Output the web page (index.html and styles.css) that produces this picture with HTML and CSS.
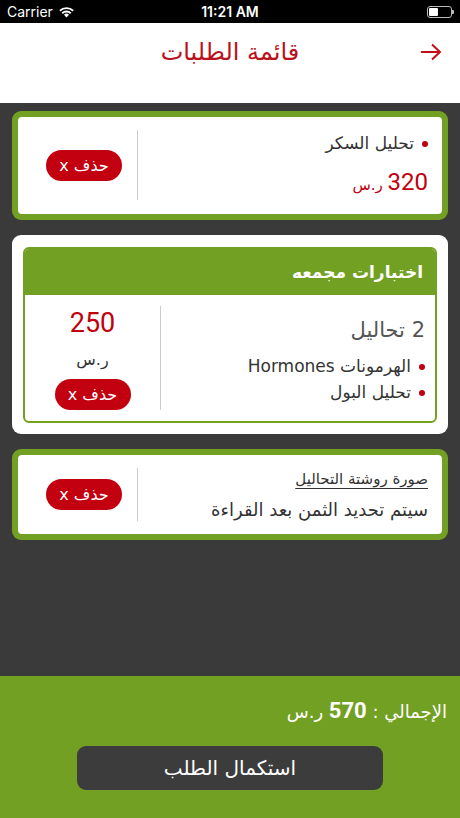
FILE: index.html
```html
<!DOCTYPE html>
<html lang="ar" dir="rtl">

<head>
	<meta charset="UTF-8">
	<title>قائمة الطلبات</title>
	<link rel="stylesheet" href="styles.css">
</head>

<body>
	<div class="status" dir="ltr">
		<div class="carrier">Carrier
			<svg width="17" height="12" viewBox="0 0 17 12">
				<path d="M8.5 11.5 L6 8.8 A3.6 3.6 0 0 1 11 8.8 Z" fill="#fff" />
				<path d="M3.6 6.6 A7 7 0 0 1 13.4 6.6 L12.1 8 A5.2 5.2 0 0 0 4.9 8 Z" fill="#fff" />
				<path d="M1.2 4.1 A10.5 10.5 0 0 1 15.8 4.1 L14.5 5.5 A8.6 8.6 0 0 0 2.5 5.5 Z" fill="#fff" />
			</svg>
		</div>
		<div class="time">11:21 AM</div>
		<div class="battery"><span class="level"></span></div>
	</div>

	<div class="topbar">
		<svg class="back" width="24" height="18" viewBox="0 0 24 18">
			<path d="M2 9 H21 M13 1.5 L21 9 L13 16.5" fill="none" stroke="#c0101a" stroke-width="2" />
		</svg>
		<h1>قائمة الطلبات</h1>
	</div>

	<div class="list">
		<div class="card green">
			<div class="inner">
				<div class="info">
					<p class="item">تحليل السكر</p>
					<p class="price"><b>320</b> ر.س</p>
				</div>
				<div class="side">
					<button class="del">حذف x</button>
				</div>
			</div>
		</div>

		<div class="card white">
			<div class="group">
				<div class="group-head">اختبارات مجمعه</div>
				<div class="group-body">
					<div class="info">
						<p class="count">2 تحاليل</p>
						<p class="item">الهرمونات Hormones</p>
						<p class="item">تحليل البول</p>
					</div>
					<div class="side center">
						<div class="big">250</div>
						<div class="cur">ر.س</div>
						<button class="del">حذف x</button>
					</div>
				</div>
			</div>
		</div>

		<div class="card green">
			<div class="inner short">
				<div class="info">
					<p class="link">صورة روشتة التحاليل</p>
					<p class="note">سيتم تحديد الثمن بعد القراءة</p>
				</div>
				<div class="side">
					<button class="del">حذف x</button>
				</div>
			</div>
		</div>
	</div>

	<div class="footer">
		<p class="total">الإجمالي : <b>570</b> ر.س</p>
		<button class="checkout">استكمال الطلب</button>
	</div>
</body>

</html>
```

FILE: styles.css
```css
* {
    margin: 0;
    padding: 0;
    box-sizing: border-box;
}
body {
    width: 460px;
    height: 818px;
    display: flex;
    flex-direction: column;
    font-family: "DejaVu Sans", "Noto Sans", sans-serif;
    background: #3a3a3a;
    overflow: hidden;
}
.status {
    height: 23px;
    background: #000;
    color: #fff;
    display: flex;
    align-items: center;
    justify-content: space-between;
    padding: 0 8px 0 7px;
    font-family: Inter, Roboto, sans-serif;
    font-size: 14px;
    position: relative;
}
.carrier {
    display: flex;
    align-items: center;
    gap: 5px;
}
.time {
    position: absolute;
    left: 0;
    right: 0;
    text-align: center;
    font-weight: 600;
}
.battery {
    width: 25px;
    height: 12px;
    border: 1px solid #bbb;
    border-radius: 3px;
    padding: 1px;
    position: relative;
}
.battery:after {
    content: '';
    position: absolute;
    right: -3px;
    top: 3px;
    width: 2px;
    height: 4px;
    background: #bbb;
    border-radius: 0 1px 1px 0;
}
.level {
    display: block;
    width: 9px;
    height: 100%;
    background: #fff;
    border-radius: 1px;
}
.topbar {
    height: 80px;
    background: #fff;
    position: relative;
    padding-top: 13px;
}
.topbar h1 {
    text-align: center;
    color: #b8121c;
    font-size: 24px;
    font-weight: normal;
    line-height: 32px;
}
.back {
    position: absolute;
    right: 17px;
    top: 20px;
}
.list {
    flex: 1;
    padding: 8px 12px;
    display: flex;
    flex-direction: column;
    gap: 15px;
}
.card {
    border-radius: 9px;
}
.card.green {
    background: #72a022;
    padding: 6px;
}
.card.white {
    background: #fff;
    padding: 12px 11px 11px;
}
.inner {
    background: #fff;
    border-radius: 4px;
    display: flex;
    height: 97px;
    padding: 13px 0 14px;
}
.inner.short {
    height: 79px;
    padding: 13px 0;
}
.info {
    flex: 1;
    padding: 0 14px;
}
.side {
    width: 120px;
    border-right: 1px solid #ccc;
    display: flex;
    align-items: center;
    justify-content: flex-end;
    padding-left: 28px;
}
.side.center {
    width: 136px;
    height: 104px;
    flex-direction: column;
    justify-content: flex-start;
    align-items: center;
    padding: 0;
}
.item {
    font-size: 17px;
    color: #333;
    line-height: 26px;
}
.item:before {
    content: '';
    display: inline-block;
    width: 6px;
    height: 6px;
    border-radius: 50%;
    background: #c00010;
    margin-left: 8px;
    vertical-align: middle;
}
.price {
    color: #c00010;
    font-size: 15px;
    line-height: 28px;
    margin-top: 12px;
}
.price b {
    font-family: Roboto, sans-serif;
    font-weight: normal;
    font-size: 24px;
}
.del {
    width: 76px;
    height: 31px;
    border: 0;
    border-radius: 16px;
    background: #c2000f;
    color: #fff;
    font-family: "DejaVu Sans", sans-serif;
    font-size: 16px;
}
.group {
    border: 2px solid #72a022;
    border-radius: 6px;
    overflow: hidden;
}
.group-head {
    background: #72a022;
    color: #fff;
    height: 46px;
    line-height: 46px;
    padding-right: 12px;
    font-size: 17px;
    font-weight: bold;
}
.group-body {
    display: flex;
    padding: 11px 0;
}
.group-body .info {
    padding: 9px 10px 0;
}
.count {
    font-size: 21px;
    line-height: 30px;
    color: #555;
    margin-bottom: 8px;
}
.big {
    color: #c00010;
    font-family: Roboto, sans-serif;
    font-size: 27px;
    line-height: 32px;
    margin-top: 1px;
}
.cur {
    font-size: 16px;
    line-height: 20px;
    color: #333;
    margin: 11px 0 9px;
}
.link {
    font-size: 15px;
    line-height: 22px;
    color: #333;
    text-decoration: underline;
    text-underline-offset: 4px;
}
.note {
    font-size: 18px;
    line-height: 26px;
    color: #333;
    margin-top: 7px;
}
.footer {
    height: 142px;
    background: #72a022;
    padding: 22px 13px 0;
}
.total {
    color: #fff;
    font-size: 18px;
}
.total b {
    font-family: Roboto, sans-serif;
    font-size: 22px;
}
.checkout {
    display: block;
    width: 306px;
    height: 44px;
    margin: 23px auto 0;
    border: 0;
    border-radius: 9px;
    background: #3c3c3c;
    color: #fff;
    font-family: "DejaVu Sans", sans-serif;
    font-size: 20px;
}
```
